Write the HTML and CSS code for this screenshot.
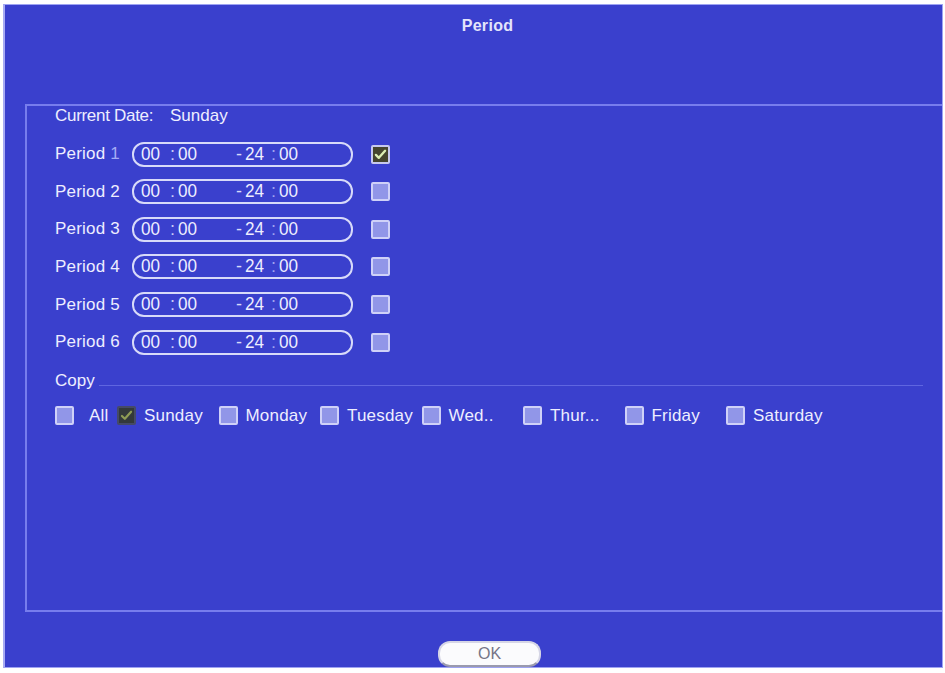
FILE: index.html
```
<!DOCTYPE html>
<html>
<head>
<meta charset="utf-8">
<link rel="stylesheet" href="styles.css">
</head>
<body>
<div class="panel">
  <div class="header"><span class="title">Period</span></div>
  <div class="box">
    <div class="date-row"><span class="date-label">Current Date:</span><span>Sunday</span></div>
    <div class="rows">
      <div class="row"><span class="plabel">Period <span class="dim">1</span></span><div class="pill"><span class="t a">00</span><span class="c">:</span><span class="t b">00</span><span class="dash">-</span><span class="t d">24</span><span class="c c2">:</span><span class="t e">00</span></div><span class="cb on"><svg viewBox="0 0 18 18" width="15" height="15"><path d="M3.5 9.5 L7 13 L14.5 4.5" fill="none" stroke="#dcefb4" stroke-width="2.8" stroke-linecap="round" stroke-linejoin="round"/></svg></span></div>
      <div class="row"><span class="plabel">Period 2</span><div class="pill"><span class="t a">00</span><span class="c">:</span><span class="t b">00</span><span class="dash">-</span><span class="t d">24</span><span class="c c2">:</span><span class="t e">00</span></div><span class="cb"></span></div>
      <div class="row"><span class="plabel">Period 3</span><div class="pill"><span class="t a">00</span><span class="c">:</span><span class="t b">00</span><span class="dash">-</span><span class="t d">24</span><span class="c c2">:</span><span class="t e">00</span></div><span class="cb"></span></div>
      <div class="row"><span class="plabel">Period 4</span><div class="pill"><span class="t a">00</span><span class="c">:</span><span class="t b">00</span><span class="dash">-</span><span class="t d">24</span><span class="c c2">:</span><span class="t e">00</span></div><span class="cb"></span></div>
      <div class="row"><span class="plabel">Period 5</span><div class="pill"><span class="t a">00</span><span class="c">:</span><span class="t b">00</span><span class="dash">-</span><span class="t d">24</span><span class="c c2">:</span><span class="t e">00</span></div><span class="cb"></span></div>
      <div class="row"><span class="plabel">Period 6</span><div class="pill"><span class="t a">00</span><span class="c">:</span><span class="t b">00</span><span class="dash">-</span><span class="t d">24</span><span class="c c2">:</span><span class="t e">00</span></div><span class="cb"></span></div>
    </div>
    <div class="copy-head"><span>Copy</span><span class="copy-line"></span></div>
    <div class="days">
      <div class="day first"><span class="cb"></span><span class="dl wide">All</span></div>
      <div class="day"><span class="cb dis"><svg viewBox="0 0 18 18" width="15" height="15"><path d="M3.5 9.5 L7 13 L14.5 4.5" fill="none" stroke="#8e9c55" stroke-width="2.6" stroke-linecap="round" stroke-linejoin="round"/></svg></span><span class="dl">Sunday</span></div>
      <div class="day"><span class="cb"></span><span class="dl">Monday</span></div>
      <div class="day"><span class="cb"></span><span class="dl">Tuesday</span></div>
      <div class="day"><span class="cb"></span><span class="dl">Wed..</span></div>
      <div class="day"><span class="cb"></span><span class="dl">Thur...</span></div>
      <div class="day"><span class="cb"></span><span class="dl">Friday</span></div>
      <div class="day"><span class="cb"></span><span class="dl">Saturday</span></div>
    </div>
  </div>
  <div class="footer"><button class="ok">OK</button></div>
</div>
</body>
</html>
```
FILE: styles.css
```
html, body {
  margin: 0;
  padding: 0;
  background: #ffffff;
}
body {
  font-family: "Liberation Sans", Arial, sans-serif;
  color: #eeeeff;
  font-size: 17px;
}
.panel {
  margin: 4px 0 0 3px;
  width: 937px;
  height: 662px;
  border: 1px solid #9ea3f2;
  border-left: 2px solid #a7abf3;
  background: #3a40cd;
  display: flex;
  flex-direction: column;
}
.header {
  height: 99px;
  box-sizing: border-box;
  padding: 11px 0 0 28px;
  text-align: center;
  line-height: 20px;
}
.title {
  font-size: 16px;
  font-weight: bold;
  color: #e4e5fb;
  letter-spacing: 0.3px;
}
.box {
  margin-left: 20px;
  height: 506px;
  border: 2px solid #777ded;
  border-right: none;
  padding: 0 19px 0 28px;
}
.date-row {
  display: flex;
  height: 20px;
  line-height: 20px;
}
.date-label {
  width: 115px;
  letter-spacing: -0.3px;
}
.rows {
  margin-top: 16px;
  display: flex;
  flex-direction: column;
  gap: 12.6px;
}
.row {
  display: flex;
  align-items: center;
  height: 25px;
}
.plabel {
  width: 77px;
  letter-spacing: 0.2px;
}
.dim {
  color: #a6abf5;
}
.pill {
  width: 221px;
  height: 25px;
  box-sizing: border-box;
  border: 2px solid #d8daf9;
  border-radius: 12px;
  display: flex;
  align-items: center;
  padding-left: 7px;
  font-size: 18px;
  line-height: 21px;
}
.t {
  display: inline-block;
  transform: scaleX(0.95);
  transform-origin: left center;
}
.a { width: 29px; }
.c {
  width: 8px;
  color: #c8cbf7;
}
.c2 {
  color: #9ea3f0;
}
.b { width: 58px; }
.dash {
  width: 9px;
  color: #d8daf9;
}
.d { width: 26px; }
.e { width: 24px; }
.cb {
  margin-left: 18px;
  width: 19px;
  height: 19px;
  box-sizing: border-box;
  border: 2px solid #cfd1f8;
  border-radius: 2px;
  background: #9196e8;
  display: flex;
  align-items: center;
  justify-content: center;
  flex: none;
}
.cb.on {
  background: #45452e;
  border-color: #c6c8ee;
}
.cb.dis {
  background: #33393a;
  border-color: #454a66;
}
.copy-head {
  margin-top: 16px;
  display: flex;
  align-items: flex-end;
  height: 20px;
  line-height: 20px;
}
.copy-line {
  flex: 1;
  margin-left: 4px;
  margin-bottom: 5px;
  border-bottom: 1px solid #5f66e0;
}
.days {
  margin-top: 15px;
  display: flex;
  align-items: center;
  height: 19px;
}
.day {
  width: 101.5px;
  display: flex;
  align-items: center;
  flex: none;
}
.day.first {
  width: 62px;
}
.day .cb {
  margin-left: 0;
}
.dl {
  margin-left: 8px;
  line-height: 19px;
  letter-spacing: 0.2px;
}
.dl.wide {
  margin-left: 15px;
}
.footer {
  flex: 1;
  display: flex;
  justify-content: center;
  padding: 29px 0 0 32px;
}
.ok {
  width: 103px;
  height: 26px;
  border: 2px solid #d6d6e6;
  border-bottom-color: #9a9aae;
  border-radius: 12px;
  background: #fbfbfd;
  color: #757587;
  font-family: "Liberation Sans", Arial, sans-serif;
  font-size: 16px;
  line-height: 20px;
  padding: 0;
}
```
